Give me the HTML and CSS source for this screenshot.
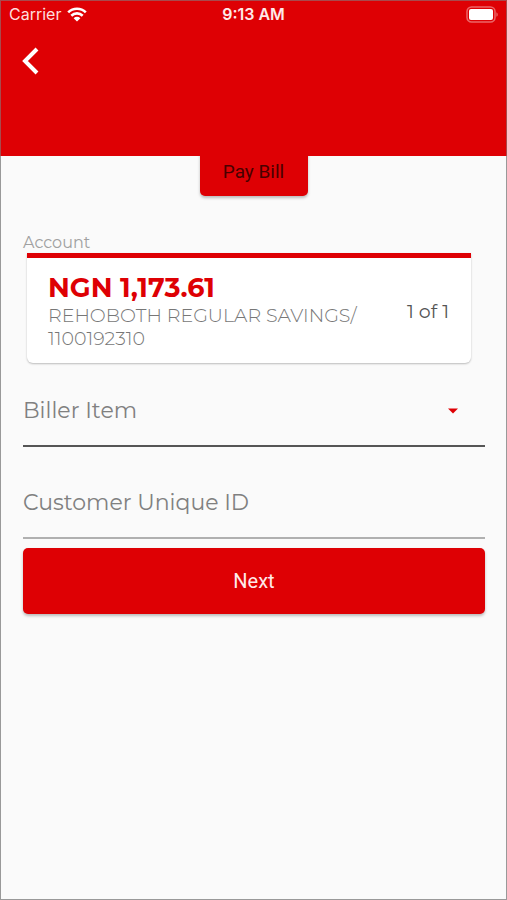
FILE: index.html
```html
<!DOCTYPE html>
<html lang="en">
<head>
<meta charset="utf-8">
<meta name="viewport" content="width=device-width, initial-scale=1">
<title>Pay Bill</title>
<link rel="stylesheet" href="styles.css">
</head>
<body>
<div class="screen">
  <header class="header">
    <div class="status">
      <div class="carrier">
        <span>Carrier</span>
        <svg class="wifi" viewBox="0 0 20 15" aria-hidden="true">
          <path d="M1.2 5.4a12.6 12.6 0 0 1 17.6 0M4.3 8.7a8.2 8.2 0 0 1 11.4 0" fill="none" stroke="currentColor" stroke-width="2.6"/>
          <path d="M10 14.6 6.6 11.2a4.9 4.9 0 0 1 6.8 0z" fill="currentColor"/>
        </svg>
      </div>
      <span class="time">9:13 AM</span>
      <svg class="battery" viewBox="0 0 32 17" aria-hidden="true">
        <rect x="1" y="1" width="28" height="15" rx="4.5" fill="none" stroke="#fff" stroke-opacity=".4" stroke-width="1.5"/>
        <rect x="3" y="3" width="24" height="11" rx="2" fill="#fff"/>
        <path d="M30.5 6.2c1.5.8 1.5 3.8 0 4.6z" fill="#fff" fill-opacity=".5"/>
      </svg>
    </div>
    <button class="back" type="button" aria-label="Back">
      <svg viewBox="0 0 18 28" aria-hidden="true"><path d="M16 2 4 14l12 12" fill="none" stroke="currentColor" stroke-width="4"/></svg>
    </button>
  </header>
  <main class="content">
    <h1 class="title">Pay Bill</h1>
    <form class="form">
      <section class="account" aria-labelledby="account-label">
        <h2 class="account-label" id="account-label">Account</h2>
        <div class="card">
          <div class="details">
            <strong class="balance">NGN 1,173.61</strong>
            <span class="name">REHOBOTH REGULAR SAVINGS/<br>1100192310</span>
          </div>
          <span class="count">1 of 1</span>
        </div>
      </section>
      <div class="field field-dark">
        <label for="biller">Biller Item</label>
        <select id="biller"><option value=""></option></select>
        <svg class="caret" viewBox="0 0 10 6" aria-hidden="true"><path d="M0 .5h10L5 5.5z" fill="currentColor"/></svg>
      </div>
      <div class="field">
        <label for="customer">Customer Unique ID</label>
        <input id="customer" type="text">
      </div>
      <button class="next" type="button">Next</button>
    </form>
  </main>
</div>
</body>
</html>
```
FILE: styles.css
```css
:root {
  --red: #de0004;
  --display: Montserrat, Inter, sans-serif;
}

* { box-sizing: border-box; }

body {
  margin: 0;
  font-family: Inter, "Liberation Sans", sans-serif;
  background: #fafafa;
}

.screen {
  min-height: 100vh;
  border: 1px solid #999;
  background: #fafafa;
}

.header {
  height: 156px;
  margin: -1px -1px 0;
  border: 1px solid #a84a4d;
  border-bottom: 0;
  background: var(--red);
  color: #fff;
}

.status {
  display: grid;
  grid-template-columns: 1fr auto 1fr;
  align-items: center;
  height: 26px;
  padding: 0 8px;
  font-size: 16px;
  line-height: 20px;
}

.carrier {
  display: flex;
  align-items: center;
  gap: 6px;
  color: #ffdede;
}

.wifi { width: 20px; height: 15px; color: #fff; }

.time { font-weight: 600; color: #ffe9e9; }

.battery { width: 32px; height: 17px; justify-self: end; }

.back {
  display: block;
  margin: 20px 0 0 20px;
  padding: 0;
  border: 0;
  background: none;
  color: #fff;
}

.back svg { display: block; width: 18px; height: 28px; }

.title {
  width: 108px;
  margin: -8px auto 0;
  border-radius: 0 0 5px 5px;
  background: var(--red);
  box-shadow: 0 2px 3px rgba(0, 0, 0, .25);
  clip-path: inset(8px -8px -8px);
  color: #480000;
  font-family: Roboto, sans-serif;
  font-size: 19px;
  font-weight: 400;
  line-height: 48px;
  text-align: center;
}

.form {
  display: flex;
  flex-direction: column;
  padding: 37px 21px 0 22px;
  font-family: var(--display);
}

.account-label {
  margin: 0;
  color: #a0a0a0;
  font-size: 16px;
  font-weight: 400;
  line-height: 20px;
}

.card {
  display: flex;
  align-items: center;
  justify-content: space-between;
  margin: 0 14px 0 4px;
  padding: 14px 22px 13px 21px;
  border-top: 5px solid var(--red);
  border-radius: 0 0 6px 6px;
  background: #fff;
  box-shadow: 0 1px 2px rgba(0, 0, 0, .25);
}

.details { display: flex; flex-direction: column; }

.balance {
  color: var(--red);
  font-size: 27px;
  font-weight: 700;
  line-height: 32px;
}

.name {
  color: #777;
  font-size: 19px;
  font-weight: 300;
  line-height: 23px;
}

.count {
  color: #555;
  font-size: 19px;
  white-space: nowrap;
}

.field {
  display: grid;
  align-items: center;
  height: 92px;
  border-bottom: 2px solid #b0b0b0;
  color: #808080;
  font-size: 22px;
}

.field-dark {
  height: 84px;
  border-bottom-color: #555;
}

.field > * { grid-area: 1 / 1; }

.field label { padding-top: 20px; }

.field-dark label { padding-top: 12px; }

.field select,
.field input {
  width: 100%;
  height: 70px;
  padding: 0;
  border: 0;
  outline: 0;
  appearance: none;
  background: transparent;
  font: inherit;
  color: #444;
}

.caret {
  justify-self: end;
  width: 10px;
  height: 6px;
  margin: 14px 27px 0 0;
  color: var(--red);
  pointer-events: none;
}

.next {
  height: 66px;
  margin-top: 9px;
  border: 0;
  border-radius: 5px;
  background: var(--red);
  box-shadow: 0 2px 3px rgba(0, 0, 0, .25);
  color: #ffeaea;
  font-family: Roboto, sans-serif;
  font-size: 20px;
}
```
